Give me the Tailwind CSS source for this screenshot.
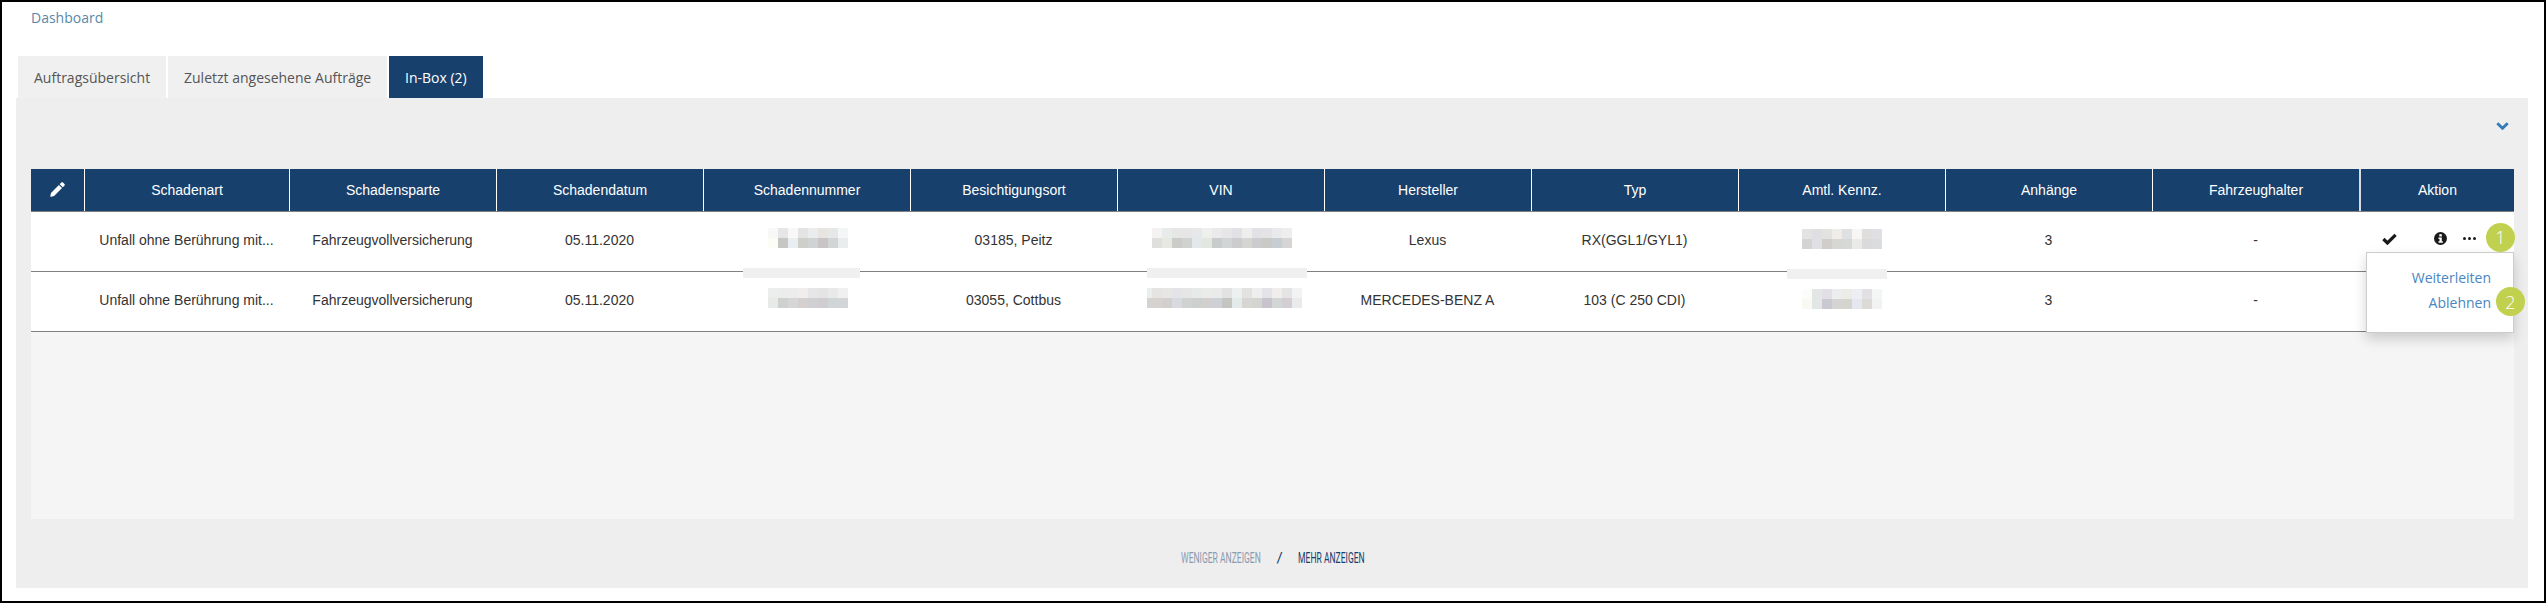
<!DOCTYPE html>
<html lang="de">
<head>
<meta charset="utf-8">
<title>Dashboard</title>
<script src="https://cdn.jsdelivr.net/npm/@tailwindcss/browser@4"></script>
</head>
<body class="bg-white">
<div class="w-[2546px] h-[603px] border-2 border-black bg-white overflow-hidden flex flex-col font-['Open_Sans',sans-serif]">
  <div class="h-[54px] pl-[29px] pt-[5px] text-[14px] leading-[22px] text-[#5b87a8]">Dashboard</div>

  <div class="h-[42px] pl-[16px] flex gap-[2px] text-[14px]">
    <div class="w-[148px] bg-[#f0f0f0] text-[#555] flex items-center pl-[16px]">Auftragsübersicht</div>
    <div class="w-[219px] bg-[#f0f0f0] text-[#555] flex items-center pl-[16px]">Zuletzt angesehene Aufträge</div>
    <div class="w-[94px] bg-[#17406d] text-white flex items-center pl-[16px]">In-Box (2)</div>
  </div>

  <div class="ml-[14px] w-[2512px] h-[490px] bg-[#eeeeee] flex flex-col">
    <div class="h-[71px] flex justify-end items-start pr-[19px] pt-[24px]">
      <svg class="w-[13px] h-[8px]" viewBox="0 0 13 8" fill="none"><path d="M1.3 1.3 6.5 6.3 11.7 1.3" stroke="#337ab7" stroke-width="2.8"/></svg>
    </div>

    <div class="mx-[15px] w-[2483px] h-[350px] bg-[#f5f5f5] font-['Liberation_Sans',sans-serif] text-[14px]">
      <div class="grid grid-cols-[53px_205px_repeat(10,207px)_155px] h-[43px] bg-[#17406d] text-white border-b border-[#808080] text-center">
        <div class="flex items-center justify-center pb-[2px]">
          <svg class="w-[15px] h-[15px]" viewBox="0 0 15 15" fill="white"><path d="M11.3.6a1.2 1.2 0 0 1 1.7 0l1.4 1.4a1.2 1.2 0 0 1 0 1.7l-1.6 1.6-3.1-3.1zM8.9 3l3.1 3.1-7.9 7.9-3.1.8-.8-.3.8-3.600z"/></svg>
        </div>
        <div class="border-l border-white flex items-center justify-center">Schadenart</div>
        <div class="border-l border-white flex items-center justify-center">Schadensparte</div>
        <div class="border-l border-white flex items-center justify-center">Schadendatum</div>
        <div class="border-l border-white flex items-center justify-center">Schadennummer</div>
        <div class="border-l border-white flex items-center justify-center">Besichtigungsort</div>
        <div class="border-l border-white flex items-center justify-center">VIN</div>
        <div class="border-l border-white flex items-center justify-center">Hersteller</div>
        <div class="border-l border-white flex items-center justify-center">Typ</div>
        <div class="border-l border-white flex items-center justify-center">Amtl. Kennz.</div>
        <div class="border-l border-white flex items-center justify-center">Anhänge</div>
        <div class="border-l border-white flex items-center justify-center">Fahrzeughalter</div>
        <div class="border-l-2 border-[#d5dbe3] flex items-center justify-center">Aktion</div>
      </div>

      <!-- row 1 -->
      <div class="grid grid-cols-[53px_205px_repeat(10,207px)_155px] h-[60px] bg-white border-b border-[#808080] text-center text-[#333]">
        <div></div>
        <div class="flex items-center justify-center pb-[2px]">Unfall ohne Berührung mit...</div>
        <div class="flex items-center justify-center pb-[2px]">Fahrzeugvollversicherung</div>
        <div class="flex items-center justify-center pb-[2px]">05.11.2020</div>
        <div class="relative flex items-center justify-center pb-2 pl-[2px]">
          <div class="grid grid-cols-[repeat(8,10px)] auto-rows-[10px]">
            <i class="bg-[#f8f8f6]"></i><i class="bg-[#e6e6e6]"></i><i class="bg-[#f8f8f8]"></i><i class="bg-[#e4e4e4]"></i><i class="bg-[#eaecee]"></i><i class="bg-[#e8e4e2]"></i><i class="bg-[#e6e8e8]"></i><i class="bg-[#f4f6f8]"></i>
            <i class="bg-[#fdfdf8]"></i><i class="bg-[#c8c5c5]"></i><i class="bg-[#e8eef2]"></i><i class="bg-[#cfcfca]"></i><i class="bg-[#d0d2d4]"></i><i class="bg-[#c9c4c6]"></i><i class="bg-[#d2d5d5]"></i><i class="bg-[#eaecee]"></i>
          </div>
          <div class="absolute z-10 left-[40px] top-[56px] w-[117px] h-[10px] bg-[#f0f0f0]"></div>
        </div>
        <div class="flex items-center justify-center pb-[2px]">03185, Peitz</div>
        <div class="relative flex items-center justify-center pb-2 pl-[2px]">
          <div class="grid grid-cols-[repeat(14,10px)] auto-rows-[10px]">
            <i class="bg-[#f4f3f1]"></i><i class="bg-[#e8ebeb]"></i><i class="bg-[#e6e6e4]"></i><i class="bg-[#e6e6e6]"></i><i class="bg-[#e6e8ea]"></i><i class="bg-[#eef0ee]"></i><i class="bg-[#ece9ea]"></i><i class="bg-[#e6e6e8]"></i><i class="bg-[#e2e2e6]"></i><i class="bg-[#f0eeec]"></i><i class="bg-[#e2e2e6]"></i><i class="bg-[#e4e4e6]"></i><i class="bg-[#e8eaec]"></i><i class="bg-[#eeeeec]"></i>
            <i class="bg-[#dfdfdd]"></i><i class="bg-[#e6e8e2]"></i><i class="bg-[#cbcbc9]"></i><i class="bg-[#d0d2d0]"></i><i class="bg-[#e3e8ea]"></i><i class="bg-[#e4e6e0]"></i><i class="bg-[#c9cccc]"></i><i class="bg-[#d2d5d6]"></i><i class="bg-[#cccccf]"></i><i class="bg-[#d6d5d2]"></i><i class="bg-[#cccccf]"></i><i class="bg-[#c9c9c6]"></i><i class="bg-[#c7ced2]"></i><i class="bg-[#d6d4d4]"></i>
          </div>
          <div class="absolute z-10 left-[30px] top-[56px] w-[160px] h-[10px] bg-[#f0f0f0]"></div>
        </div>
        <div class="flex items-center justify-center pb-[2px]">Lexus</div>
        <div class="flex items-center justify-center pb-[2px]">RX(GGL1/GYL1)</div>
        <div class="relative flex items-center justify-center pb-[6px]">
          <div class="grid grid-cols-[repeat(8,10px)] auto-rows-[10px]">
            <i class="bg-[#e2e4e4]"></i><i class="bg-[#dfdfe2]"></i><i class="bg-[#e2e2e0]"></i><i class="bg-[#f0ece8]"></i><i class="bg-[#dee0e2]"></i><i class="bg-[#f6f6f6]"></i><i class="bg-[#e0dedc]"></i><i class="bg-[#e0e0e4]"></i>
            <i class="bg-[#d4d4d4]"></i><i class="bg-[#e0e0e4]"></i><i class="bg-[#d0ceca]"></i><i class="bg-[#d6d6d2]"></i><i class="bg-[#d6d8d8]"></i><i class="bg-[#eaeae8]"></i><i class="bg-[#dadadc]"></i><i class="bg-[#dadcde]"></i>
          </div>
          <div class="absolute z-10 left-[49px] top-[57px] w-[100px] h-[10px] bg-[#f0f0f0]"></div>
        </div>
        <div class="flex items-center justify-center pb-[2px]">3</div>
        <div class="flex items-center justify-center pb-[2px]">-</div>
        <div class="relative flex items-center pb-[6px] text-[#111]">
          <svg class="ml-[23px] w-[15px] h-[12px]" viewBox="0 0 15 12" fill="none"><path d="M1.400 6 5.400 10 13.600 1.800" stroke="#1a1a1a" stroke-width="3.200"/></svg>
          <svg class="ml-[37px] w-[13px] h-[13px]" viewBox="0 0 13 13"><circle cx="6.500" cy="6.500" r="6.500" fill="#1a1a1a"/><rect x="5.300" y="2.200" width="2.500" height="2.300" fill="#fff"/><path d="M4.500 5.400h3.300v3.900h1v1.500h-4.300v-1.500h1v-2.400h-1z" fill="#fff"/></svg>
          <svg class="ml-[16px] w-[13px] h-[3px]" viewBox="0 0 13 3" fill="#1a1a1a"><circle cx="1.500" cy="1.500" r="1.500"/><circle cx="6.500" cy="1.500" r="1.500"/><circle cx="11.500" cy="1.500" r="1.500"/></svg>
          <div class="absolute z-20 left-[127px] top-[11px] w-[29px] h-[29px] rounded-full bg-[#c1d14f] text-white flex items-center justify-center font-['Open_Sans',sans-serif] font-light text-[18px]">1</div>
          <div class="absolute z-10 left-[7px] top-[40px] w-[148px] h-[81px] bg-white border border-[#cccccc] shadow-[0_6px_12px_rgba(0,0,0,0.175)] pt-[12px] pr-[22px] text-right font-['Open_Sans',sans-serif] text-[14px] leading-[25px] text-[#4a86c0]">
            <div>Weiterleiten</div>
            <div>Ablehnen</div>
            <div class="absolute left-[129px] top-[34px] w-[29px] h-[29px] rounded-full bg-[#c1d14f] text-white flex items-center justify-center font-light text-[18px] leading-none">2</div>
          </div>
        </div>
      </div>

      <!-- row 2 -->
      <div class="grid grid-cols-[53px_205px_repeat(10,207px)_155px] h-[60px] bg-white border-b border-[#808080] text-center text-[#333]">
        <div></div>
        <div class="flex items-center justify-center pb-[2px]">Unfall ohne Berührung mit...</div>
        <div class="flex items-center justify-center pb-[2px]">Fahrzeugvollversicherung</div>
        <div class="flex items-center justify-center pb-[2px]">05.11.2020</div>
        <div class="flex items-center justify-center pb-2 pl-[2px]">
          <div class="grid grid-cols-[repeat(8,10px)] auto-rows-[10px]">
            <i class="bg-[#eceeee]"></i><i class="bg-[#ececec]"></i><i class="bg-[#ececec]"></i><i class="bg-[#f0eeec]"></i><i class="bg-[#e6e6e8]"></i><i class="bg-[#e4e4e4]"></i><i class="bg-[#e8eaea]"></i><i class="bg-[#f0f0f0]"></i>
            <i class="bg-[#e8eae8]"></i><i class="bg-[#cfd0d0]"></i><i class="bg-[#d6d6d6]"></i><i class="bg-[#d6cfcf]"></i><i class="bg-[#cfcfd4]"></i><i class="bg-[#cfcdd0]"></i><i class="bg-[#d0d5d6]"></i><i class="bg-[#d4d5d8]"></i>
          </div>
        </div>
        <div class="flex items-center justify-center pb-[2px]">03055, Cottbus</div>
        <div class="flex items-center justify-center pb-2 pl-[7px]">
          <div class="grid grid-cols-[5px_repeat(15,10px)] auto-rows-[10px]">
            <i class="bg-[#eaeeec]"></i><i class="bg-[#e6e4e2]"></i><i class="bg-[#e6e6e4]"></i><i class="bg-[#e4e4e8]"></i><i class="bg-[#e6e6e6]"></i><i class="bg-[#e8eaea]"></i><i class="bg-[#eaecea]"></i><i class="bg-[#eaeaea]"></i><i class="bg-[#e2e2e2]"></i><i class="bg-[#ecf0f0]"></i><i class="bg-[#e4e2e0]"></i><i class="bg-[#eeeeee]"></i><i class="bg-[#e4e4e8]"></i><i class="bg-[#f0eeec]"></i><i class="bg-[#e4e4e4]"></i><i class="bg-[#f2f3f5]"></i>
            <i class="bg-[#d6d2d0]"></i><i class="bg-[#d6d2ce]"></i><i class="bg-[#d2d0ce]"></i><i class="bg-[#d8dae0]"></i><i class="bg-[#ced2d2]"></i><i class="bg-[#ced0d0]"></i><i class="bg-[#d2d0ce]"></i><i class="bg-[#cdd0d4]"></i><i class="bg-[#c4c4c0]"></i><i class="bg-[#e4eaea]"></i><i class="bg-[#d8d6d2]"></i><i class="bg-[#d4d4d0]"></i><i class="bg-[#c8c4ce]"></i><i class="bg-[#d2d6d6]"></i><i class="bg-[#d2ced2]"></i><i class="bg-[#e8eaec]"></i>
          </div>
        </div>
        <div class="flex items-center justify-center pb-[2px]">MERCEDES-BENZ A</div>
        <div class="flex items-center justify-center pb-[2px]">103 (C 250 CDI)</div>
        <div class="flex items-center justify-center pb-[6px]">
          <div class="grid grid-cols-[repeat(8,10px)] auto-rows-[10px]">
            <i class="bg-[#fcfcfa]"></i><i class="bg-[#e4e6e6]"></i><i class="bg-[#e2e0e6]"></i><i class="bg-[#eceeee]"></i><i class="bg-[#ecece6]"></i><i class="bg-[#eceef4]"></i><i class="bg-[#e2e0e2]"></i><i class="bg-[#f4f6f6]"></i>
            <i class="bg-[#faf8f2]"></i><i class="bg-[#e2e6e6]"></i><i class="bg-[#cac8d0]"></i><i class="bg-[#d6d4d2]"></i><i class="bg-[#d6d4ce]"></i><i class="bg-[#e4e6f0]"></i><i class="bg-[#dcdad6]"></i><i class="bg-[#f0f2f4]"></i>
          </div>
        </div>
        <div class="flex items-center justify-center pb-[2px]">3</div>
        <div class="flex items-center justify-center pb-[2px]">-</div>
        <div></div>
      </div>
    </div>

    <div class="flex-1 flex items-center justify-center pt-[10px] font-['Roboto',sans-serif] text-[15px]">
      <div class="w-[80px] flex justify-center text-[#8a9bb0] whitespace-nowrap"><span class="scale-x-[0.57]">WENIGER ANZEIGEN</span></div>
      <div class="w-[38px] flex justify-center text-[#17406d]">/</div>
      <div class="w-[65px] flex justify-center text-[#17406d] whitespace-nowrap"><span class="scale-x-[0.57]">MEHR ANZEIGEN</span></div>
    </div>
  </div>
</div>
</body>
</html>
